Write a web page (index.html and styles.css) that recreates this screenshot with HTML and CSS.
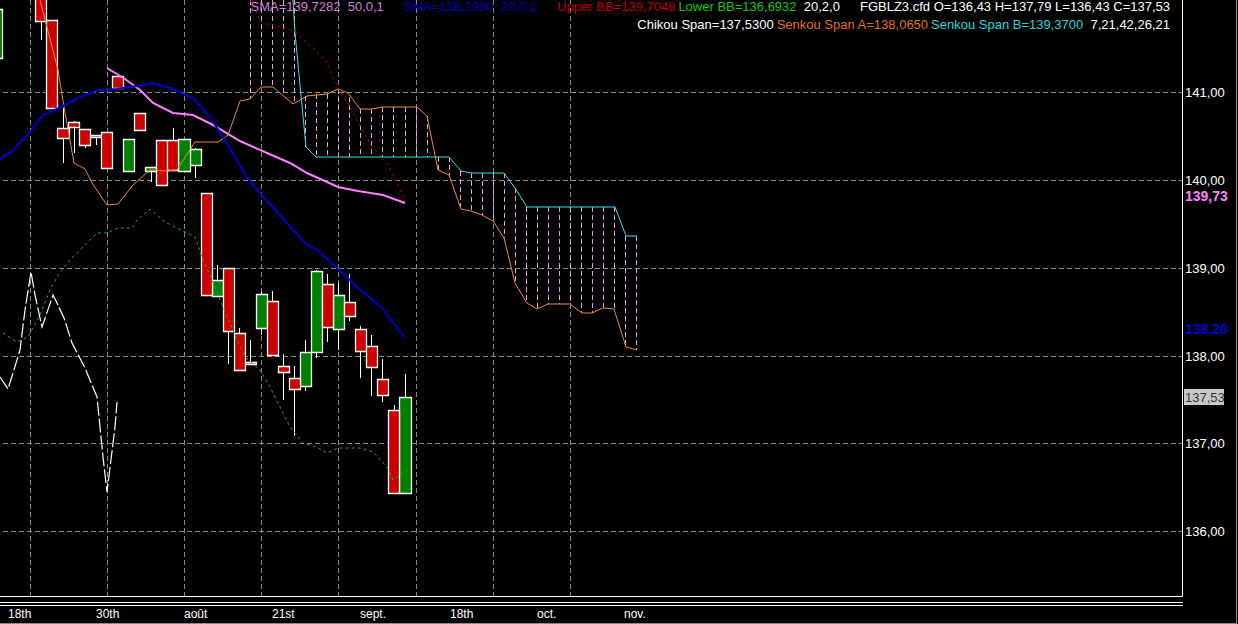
FILE: index.html
```html
<!DOCTYPE html>
<html lang="fr">
<head>
  <meta charset="UTF-8">
  <title>FGBLZ3.cfd</title>
  <link rel="stylesheet" href="styles.css">
</head>
<body>
  <div class="chart">
    <svg class="plot" width="1236" height="623" viewBox="0 0 1236 623">
      <!-- grid -->
      <path class="grid" d="M30.5 0V596M107.5 0V596M184.5 0V596M261.5 0V596M338.5 0V596M416.5 0V596M493.5 0V596M570.5 0V596"/>
      <path class="grid" d="M3 92.5H1182M3 180.5H1182M3 268.5H1182M3 356.5H1182M3 443.5H1182M3 531.5H1182"/>

      <!-- ichimoku cloud hatching -->
      <path class="hatch" d="M250.5 0V99M261.5 0V87M272.5 0V87M283.5 0V96M294.5 0V104M305.5 96V147M316.5 94V157M327.5 94V157M338.5 89V157M349.5 97V157M360.5 109V157M371.5 109V157M382.5 107V157M393.5 107V157M405.5 107V157M416.5 107V157M427.5 116V157M438.5 157V170M449.5 157V175M460.5 171V209M471.5 173V211M482.5 173V215M493.5 173V221M504.5 173V238M515.5 188V283M526.5 207V303M537.5 207V309M548.5 207V304M559.5 207V304M570.5 207V304M581.5 207V313M592.5 207V313M603.5 207V308M614.5 207V309M625.5 236V347M636.5 236V350"/>

      <!-- candles -->
      <path class="wick" d="M41.5 21V40M63.5 108V163M74.5 121V153M85.5 145V148M96.5 135V145M151.5 167V182M173.5 128V140M195.5 148V178M217.5 265V280M228.5 331V364M239.5 328V334M250.5 340V364M261.5 292V335M272.5 291V301M283.5 354V400M294.5 366V436M305.5 340V391M316.5 270V358M327.5 274V342M338.5 283V350M349.5 274V321M360.5 326V378M371.5 335V396M382.5 359V402M394.5 405V411M405.5 374V398"/>
      <path class="up" d="M-5 9.5H2.5V58.5H-5zM123.5 139.5H134.5V171.5H123.5zM145.5 167.5H156.5V171.5H145.5zM178.5 139.5H190.5V171.5H178.5zM190.5 149.5H201.5V165.5H190.5zM212.5 280.5H223.5V296.5H212.5zM256.5 294.5H267.5V328.5H256.5zM300.5 352.5H311.5V386.5H300.5zM311.5 271.5H322.5V352.5H311.5zM333.5 295.5H344.5V329.5H333.5zM399.5 397.5H411.5V493.5H399.5z"/>
      <path class="down" d="M35.5 -5H46.5V21.5H35.5zM46.5 20.5H57.5V108.5H46.5zM57.5 128.5H69.5V138.5H57.5zM68.5 122.5H79.5V127.5H68.5zM79.5 129.5H90.5V145.5H79.5zM90.5 135.5H101.5V137.5H90.5zM101.5 132.5H112.5V168.5H101.5zM112.5 76.5H123.5V88.5H112.5zM134.5 113.5H145.5V130.5H134.5zM156.5 140.5H167.5V185.5H156.5zM167.5 140.5H178.5V170.5H167.5zM201.5 193.5H212.5V295.5H201.5zM223.5 268.5H234.5V331.5H223.5zM234.5 333.5H245.5V370.5H234.5zM245.5 362.5H256.5V364.5H245.5zM267.5 301.5H278.5V355.5H267.5zM278.5 366.5H289.5V372.5H278.5zM289.5 378.5H300.5V389.5H289.5zM322.5 284.5H333.5V327.5H322.5zM344.5 302.5H355.5V316.5H344.5zM355.5 329.5H366.5V351.5H355.5zM366.5 346.5H377.5V367.5H366.5zM377.5 379.5H388.5V395.5H377.5zM388.5 410.5H399.5V493.5H388.5z"/>

      <!-- indicators -->
      <polyline class="senkou-b" points="293,0 295,33 306,147 316,157 449,157 461,171 472,173 504,173 515,188 527,207 615,207 626,236 637,236"/>
      <polyline class="senkou-a" points="40,0 58,70 64,107 74,163 85,169 92,183 107,205 118,204 133,185 150,170 167,171 177,170 195,142 218,142 228,135 240,101 250,99 261,87 273,87 293,104 307,96 327,94 338,89 348,93 360,109 372,109 382,107 393,107 417,107 427,116 438,170 449,175 461,209 471,211 482,215 493,221 504,238 515,283 527,303 537,309 548,304 570,304 582,313 592,313 603,308 614,309 626,347 637,350"/>
      <polyline class="upper-bb" points="250,0 262,23 283,27 295,32 310,45 327,62 338,88 350,107 372,147 387,163 397,182 405,202"/>
      <polyline class="lower-bb" points="3,333 17,342 28,337 40,315 50,290 58,275 72,258 97,233 107,233 118,228 132,228 137,220 150,209 165,222 177,228 195,237 202,257 212,280 223,307 235,335 245,357 260,370 270,387 290,427 303,443 317,447 327,453 338,448 360,448 373,452 387,467 393,480 400,475 407,470"/>
      <polyline class="chikou" points="0,377 8,389 13,373 20,350 25,310 31,272 35,295 42,327 53,295 57,303 64,318 72,343 85,368 97,397 103,457 107,492 115,427 117,402"/>
      <polyline class="sma-slow" points="107,68 125,79 140,90 153,103 173,113 193,115 213,125 240,141 267,153 290,163 307,173 338,187 358,191 383,195 405,203"/>
      <polyline class="sma-fast" points="0,159 13,150 30,132 43,115 63,106 80,97 98,90 117,89 137,86 152,83 170,88 193,98 210,117 227,143 247,178 260,193 278,213 305,243 320,252 337,268 357,287 382,308 405,338"/>

      <!-- frame -->
      <path class="frame" d="M1182.5 0V596.5H0M0 602.5H1183M0 605.5H1183"/>

      <!-- price axis -->
      <text class="price" x="1185" y="97">141,00</text>
      <text class="price" x="1185" y="185">140,00</text>
      <text class="price last-slow" x="1185" y="201">139,73</text>
      <text class="price" x="1185" y="273">139,00</text>
      <text class="price last-fast" x="1185" y="334">138,20</text>
      <text class="price" x="1185" y="361">138,00</text>
      <rect class="close-tag" x="1184" y="389" width="40" height="16"/>
      <text class="price close-value" x="1185" y="402">137,53</text>
      <text class="price" x="1185" y="448">137,00</text>
      <text class="price" x="1185" y="536">136,00</text>

      <!-- time axis -->
      <text class="time" x="8" y="618">18th</text>
      <text class="time" x="96" y="618">30th</text>
      <text class="time" x="184" y="618">août</text>
      <text class="time" x="272" y="618">21st</text>
      <text class="time" x="360" y="618">sept.</text>
      <text class="time" x="450" y="618">18th</text>
      <text class="time" x="537" y="618">oct.</text>
      <text class="time" x="624" y="618">nov.</text>
    </svg>

    <div class="legend">
      <div class="legend-row">
        <span class="sma-slow-text">SMA=139,7282  50,0,1</span>
        <span class="sma-fast-text wide">SMA=138,1990  20,0,1</span>
        <span class="upper-text wide">Upper BB=139,7048</span>
        <span class="lower-text narrow">Lower BB=136,6932</span>
        <span>  20,2,0</span>
        <span class="wide">FGBLZ3.cfd O=136,43 H=137,79 L=136,43 C=137,53</span>
      </div>
      <div class="legend-row">
        <span>Chikou Span=137,5300</span>
        <span class="senkou-a-text narrow">Senkou Span A=138,0650</span>
        <span class="senkou-b-text narrow">Senkou Span B=139,3700</span>
        <span>  7,21,42,26,21</span>
      </div>
    </div>
  </div>
</body>
</html>
```

FILE: styles.css
```css
html, body { margin: 0; padding: 0; background: #000; overflow: hidden; }
body { font-family: "Liberation Sans", Arial, sans-serif; }

.chart { position: relative; width: 1236px; height: 623px; background: #000; border-right: 1px solid #8a8a8a; border-bottom: 1px solid #8a8a8a; }
.plot { display: block; }
.plot path, .plot polyline { fill: none; }

.grid { stroke: #8c8c8c; stroke-dasharray: 5 3; }
.hatch { stroke: #e8a0e8; stroke-dasharray: 5 3; }
.wick { stroke: #fff; }
.plot .up { fill: #008000; stroke: #fff; stroke-width: 1.3; }
.plot .down { fill: #cc0000; stroke: #fff; stroke-width: 1.3; }
.frame { stroke: #fff; }

.senkou-a { stroke: #f08a40; }
.senkou-b { stroke: #40e0e0; }
.upper-bb { stroke: #c00000; stroke-dasharray: 3 3; }
.lower-bb { stroke: #22b022; stroke-dasharray: 3 3; }
.chikou { stroke: #fff; stroke-width: 1.2; stroke-dasharray: 14 3; }
.sma-slow { stroke: #ff80ff; stroke-width: 2; }
.sma-fast { stroke: #0000cc; stroke-width: 2; }

.price { font-size: 13px; fill: #fff; }
.time { font-size: 12px; fill: #fff; }
.last-slow { font-size: 14px; font-weight: bold; fill: #ff80ff; }
.last-fast { font-size: 14px; font-weight: bold; fill: #0000d8; }
.close-tag { fill: #c8c8c8; }
.close-value { fill: #333; }

.legend { position: absolute; top: 0; right: 66px; font-size: 13px; line-height: 15px; color: #fff; }
.legend-row { display: flex; justify-content: flex-end; white-space: pre; margin-bottom: 4px; margin-top: -1px; }
.wide { margin-left: 20px; }
.narrow { margin-left: 3px; }
.sma-slow-text { color: #d080d8; }
.sma-fast-text { color: #0000c0; }
.upper-text { color: #c00000; }
.lower-text { color: #14c814; }
.senkou-a-text { color: #e07020; }
.senkou-b-text { color: #20d8d8; }
```
